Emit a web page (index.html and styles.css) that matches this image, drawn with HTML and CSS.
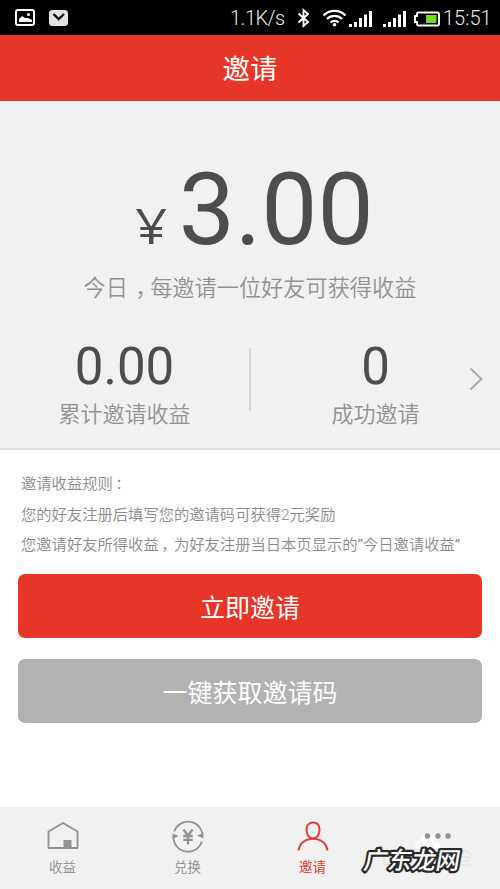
FILE: index.html
```html
<!DOCTYPE html>
<html lang="zh-CN">
<head>
<meta charset="utf-8">
<title>邀请</title>
<link rel="stylesheet" href="styles.css">
</head>
<body>
<div class="app">
  <div class="status">
    <svg class="notice" width="70" height="35" viewBox="0 0 70 35">
      <rect x="16" y="10" width="18" height="15" rx="2" fill="none" stroke="#fff" stroke-width="2"/>
      <path d="M19 22v-3l3-3 3 2 3 0 4 2v2z" fill="#fff"/><circle cx="28.500" cy="14.500" r="1.500" fill="#fff"/>
      <rect x="49" y="10" width="19" height="16" rx="3.500" fill="#e4e4e4"/>
      <path d="M53.500 14l5.200 5 5.300-5" fill="none" stroke="#111" stroke-width="2.400"/>
    </svg>
    <span class="speed">1.1K/s</span>
    <svg class="signals" width="145" height="35" viewBox="295 0 145 35">
      <path d="M298.500 13.500l9.500 8.500-4.500 4V10l4.500 4-9.500 8.500" fill="none" stroke="#fff" stroke-width="1.900"/>
      <g fill="none" stroke="#fff" stroke-width="2.200"><path d="M323.500 15.500a15.500 15.500 0 0 1 22 0M327 19a10.500 10.500 0 0 1 15 0M330.500 22.500a5.700 5.700 0 0 1 8 0"/></g>
      <circle cx="334.500" cy="24.700" r="1.800" fill="#fff"/>
      <path id="bars" d="M349 24h3v3h-3zM354 22h3v5h-3zM359 18h3v9h-3zM364 14.500h3v12.500h-3zM369 11h3v16h-3z" fill="#fff"/>
      <use href="#bars" x="34"/>
      <path d="M418.500 12.500h19a1.500 1.500 0 0 1 1.500 1.500v10a1.500 1.500 0 0 1-1.500 1.500h-19a1.500 1.500 0 0 1-1.500-1.500v-2h-2v-6h2v-2a1.500 1.500 0 0 1 1.500-1.500z" fill="none" stroke="#fff" stroke-width="1.900"/>
      <path d="M426 15h10.500v8H426z" fill="#73dc22"/>
    </svg>
    <span class="clock">15:51</span>
  </div>
  <header class="title">邀请</header>
  <section class="summary">
    <div class="amount"><span class="yen">¥</span><span>3.00</span></div>
    <p class="today">今日<span class="punct">，</span>每邀请一位好友可获得收益</p>
    <div class="stats">
      <div class="stat"><strong>0.00</strong><span>累计邀请收益</span></div>
      <div class="divider"></div>
      <div class="stat"><strong>0</strong><span>成功邀请</span></div>
      <svg class="arrow" width="14" height="24" viewBox="0 0 14 24"><path d="M1.500 1.500l11 10.500-11 10.500" fill="none" stroke="#aaa" stroke-width="2"/></svg>
    </div>
  </section>
  <main class="content">
    <div class="rules">
      <p>邀请收益规则<span class="punct">：</span></p>
      <p>您的好友注册后填写您的邀请码可获得2元奖励</p>
      <p>您邀请好友所得收益<span class="punct">，</span>为好友注册当日本页显示的<span class="quote">“</span>今日邀请收益<span class="quote">”</span></p>
    </div>
    <button class="button primary">立即邀请</button>
    <button class="button">一键获取邀请码</button>
  </main>
  <nav class="tabs">
    <div class="tab">
      <svg width="34" height="34" viewBox="0 0 34 34"><path d="M2.500 11.500L17 3l14.500 8.500v16.500h-29z" fill="none" stroke="#929292" stroke-width="1.800" stroke-linejoin="round"/><path d="M17.500 20h8v8h-8z" fill="#929292"/></svg>
      <span>收益</span>
    </div>
    <div class="tab">
      <svg width="34" height="34" viewBox="0 0 34 34"><g fill="none" stroke="#929292" stroke-width="1.800"><path d="M3.300 11.500A14.500 14.500 0 0 1 31.500 17M30.800 21.500A14.500 14.500 0 0 1 2.500 16"/></g><path d="M12.500 9.500l4.500 6 4.500-6M17 15v9.500M12.300 16h9.400M12.300 19.800h9.400" fill="none" stroke="#929292" stroke-width="2.300"/><path d="M26 15.500l6.300-2.500v5.500zM1.500 13.500l6 2.500-6 3z" fill="#929292"/></svg>
      <span>兑换</span>
    </div>
    <div class="tab active">
      <svg width="34" height="34" viewBox="0 0 34 34"><g fill="none" stroke="#df4039" stroke-width="2"><path d="M17 2.500c-4.200 0-6.500 3-6.500 7.300 0 5 2.800 8.700 6.500 8.700s6.500-3.700 6.500-8.700c0-4.300-2.300-7.300-6.500-7.300z"/><path d="M2.500 30.500C3.500 23.500 9 18.700 17 18.700s13.500 4.800 14.500 11.800"/></g></svg>
      <span>邀请</span>
    </div>
    <div class="tab more">
      <svg width="34" height="34" viewBox="0 0 34 34"><g fill="#fff"><ellipse cx="-3" cy="25" rx="2.800" ry="4"/><ellipse cx="3" cy="19" rx="3" ry="4.500"/><ellipse cx="11" cy="20" rx="3" ry="4.500"/><ellipse cx="16" cy="26" rx="3" ry="4"/></g><g fill="#929292"><circle cx="6.500" cy="16" r="2.700"/><circle cx="17" cy="16" r="2.700"/><circle cx="27" cy="16" r="2.700"/></g></svg>
    </div>
    <svg class="watermark" width="140" height="50" viewBox="360 839 140 50">
      <g fill="none" stroke="#dedede"><path d="M384 851h13v13h-13zM459 855l6-5 6 5M460 857h10M461 861h9M459 865h12"/></g>
      <text class="mark" x="365" y="869" textLength="96" transform="translate(151 0) skewX(-10)">广东龙网</text>
    </svg>
  </nav>
</div>
</body>
</html>
```
FILE: styles.css
```css
* { box-sizing: border-box; }
body { margin: 0; background: #fff; font-family: Roboto, "Noto Sans CJK SC", sans-serif; font-weight: 350; }
p { margin: 0; }
svg { display: block; flex: none; }
.app { width: 500px; height: 889px; display: flex; flex-direction: column; overflow: hidden; }
.status { height: 35px; flex: none; background: #000; color: #e8e8e8; display: flex; align-items: center; font-size: 20px; font-weight: 300; }
.speed { margin-left: 160px; width: 65px; white-space: nowrap; line-height: 35px; padding-top: 2px; letter-spacing: -.5px; }
.clock { margin-left: 3px; padding-top: 2px; line-height: 35px; }
.title { height: 66px; flex: none; background: #e63529; color: #fff; font-size: 27.500px; line-height: 66px; padding-top: 2px; text-align: center; font-weight: 400; }
.summary { height: 349px; flex: none; background: #f1f1f1; border-bottom: 2px solid #dedede; color: #4d4d4d; }
.amount { height: 165px; padding-top: 50px; padding-left: 11px; display: flex; justify-content: center; align-items: baseline; font-size: 100px; line-height: 117px; font-weight: 400; }
.yen { font-family: "Open Sans", sans-serif; font-size: 50px; margin-right: 13px; transform: scaleX(1.12); }
.today { height: 44px; line-height: 44px; text-align: center; font-size: 22.200px; color: #929292; white-space: nowrap; }
.punct { display: inline-block; width: 1em; padding-left: .16em; font-family: "Noto Sans CJK SC", sans-serif; font-feature-settings: "halt" 1; line-height: 1; }
.stats { height: 110px; display: flex; position: relative; margin-top: 30px; }
.stat { flex: 1; text-align: center; }
.stat strong { display: block; font-size: 51px; font-weight: 400; line-height: 58px; height: 59px; margin-top: -2px; }
.stat span { display: block; font-size: 22px; line-height: 36px; color: #929292; }
.divider { width: 2px; height: 63px; background: #d7d7d7; margin-top: 8px; }
.arrow { position: absolute; right: 17px; top: 27px; }
.content { height: 357px; flex: none; padding: 18px 18px 0; display: flex; flex-direction: column; }
.rules { height: 106px; padding-left: 3px; padding-top: 1px; color: #8c8c8c; font-size: 15.300px; line-height: 30.700px; white-space: nowrap; }
.quote { font-family: Roboto, sans-serif; font-weight: 400; }
.button { display: block; width: 100%; height: 64px; flex: none; border: 0; padding: 5px 0 0; border-radius: 7px; background: #b2b2b2; color: #fff; font: 400 25px/59px Roboto, "Noto Sans CJK SC", sans-serif; margin-bottom: 21px; }
.button.primary { background: #e63529; }
.tabs { height: 82px; flex: none; background: #f1f1f1; display: flex; position: relative; }
.tab { flex: 1; padding-top: 13px; display: flex; flex-direction: column; align-items: center; font-size: 13.500px; line-height: 27px; color: #8c8c8c; }
.tab.active { color: #df4039; font-weight: 400; }
.tab svg { overflow: visible; }
.watermark { position: absolute; right: 0; bottom: 0; }
.mark { font: 500 24px "Noto Sans CJK SC", sans-serif; fill: #fff; stroke: #292929; stroke-width: 4.500px; stroke-linejoin: round; paint-order: stroke; }
```
